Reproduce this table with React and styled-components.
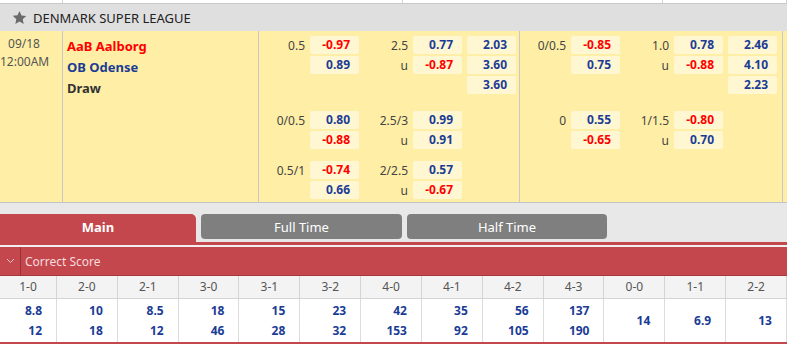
import styled, { createGlobalStyle } from "styled-components";

const GlobalStyle = createGlobalStyle`
  body {
    margin: 0;
    font-family: "Noto Sans", "Open Sans", sans-serif;
    background: #ffffff;
  }
  * {
    box-sizing: border-box;
  }
`;

const RED = "#c4474d";
const BLUE = "#1b3c95";

const blocks = [
  [
    {
      top: 4,
      rows: [
        ["0.5", "-0.97", "2.5", "0.77", "2.03"],
        ["", "0.89", "u", "-0.87", "3.60"],
        ["", null, "", null, "3.60"],
      ],
    },
    {
      top: 15,
      rows: [
        ["0/0.5", "0.80", "2.5/3", "0.99", null],
        ["", "-0.88", "u", "0.91", null],
      ],
    },
    {
      top: 10,
      rows: [
        ["0.5/1", "-0.74", "2/2.5", "0.57", null],
        ["", "0.66", "u", "-0.67", null],
      ],
    },
  ],
  [
    {
      top: 4,
      rows: [
        ["0/0.5", "-0.85", "1.0", "0.78", "2.46"],
        ["", "0.75", "u", "-0.88", "4.10"],
        ["", null, "", null, "2.23"],
      ],
    },
    {
      top: 15,
      rows: [
        ["0", "0.55", "1/1.5", "-0.80", null],
        ["", "-0.65", "u", "0.70", null],
      ],
    },
  ],
];

const scores = [
  ["1-0", "8.8", "12"],
  ["2-0", "10", "18"],
  ["2-1", "8.5", "12"],
  ["3-0", "18", "46"],
  ["3-1", "15", "28"],
  ["3-2", "23", "32"],
  ["4-0", "42", "153"],
  ["4-1", "35", "92"],
  ["4-2", "56", "105"],
  ["4-3", "137", "190"],
  ["0-0", "14"],
  ["1-1", "6.9"],
  ["2-2", "13"],
];

const Odd = ({ value, gap }) => (
  <OddBox $empty={value == null} $neg={value && value.startsWith("-")} $gap={gap}>
    {value}
  </OddBox>
);

const Block = ({ groups, width }) => (
  <OddsCell $w={width}>
    {groups.map((g, gi) => (
      <Group key={gi} $top={g.top}>
        {g.rows.map((r, ri) => (
          <OddsRow key={ri}>
            <Label $w={51}>{r[0]}</Label>
            <Odd value={r[1]} />
            <Label $w={54}>{r[2]}</Label>
            <Odd value={r[3]} />
            {r[4] !== null && <Odd value={r[4]} gap={5} />}
          </OddsRow>
        ))}
      </Group>
    ))}
  </OddsCell>
);

const StarIcon = () => (
  <svg width="15" height="15" viewBox="0 0 24 24">
    <path
      fill="#6a6a6a"
      d="M12 1.5l3.2 7.1 7.6.8-5.7 5.2 1.6 7.6L12 18.3l-6.7 3.9 1.6-7.6-5.7-5.2 7.6-.8z"
    />
  </svg>
);

const App = () => (
  <>
    <GlobalStyle />
    <TopStrip>
      <StripCell $w={63} />
      <StripCell $w={340} />
      <StripCell $w={260} />
      <StripCell />
    </TopStrip>
    <LeagueHeader>
      <StarIcon />
      <LeagueName>DENMARK SUPER LEAGUE</LeagueName>
    </LeagueHeader>
    <MatchRow>
      <TimeCell>
        09/18
        <br />
        12:00AM
      </TimeCell>
      <TeamCell>
        <Team $color="#f00">AaB Aalborg</Team>
        <Team $color={BLUE}>OB Odense</Team>
        <Team $color="#333">Draw</Team>
      </TeamCell>
      <Block groups={blocks[0]} width={261} />
      <Block groups={blocks[1]} width={263} />
    </MatchRow>
    <TabBar>
      <Tab $active>Main</Tab>
      <Tab>Full Time</Tab>
      <Tab $w={200}>Half Time</Tab>
    </TabBar>
    <RedLine />
    <SectionBar>
      <Toggle>
        <svg width="9" height="6" viewBox="0 0 9 6">
          <polyline points="1,1 4.5,4.5 8,1" fill="none" stroke="#f0c6c8" strokeWidth="1" />
        </svg>
      </Toggle>
      <SectionTitle>Correct Score</SectionTitle>
    </SectionBar>
    <ScoreGrid>
      {scores.map((s) => (
        <HeadCell key={s[0]}>{s[0]}</HeadCell>
      ))}
      {scores.map((s) => (
        <ValueCell key={s[0]}>
          {s.slice(1).map((v, i) => (
            <div key={i}>{v}</div>
          ))}
        </ValueCell>
      ))}
    </ScoreGrid>
  </>
);

const TopStrip = styled.div`
  display: flex;
  height: 4px;
  border-bottom: 1px solid #c9c9c9;
`;

const StripCell = styled.div`
  width: ${(p) => (p.$w ? `${p.$w}px` : "auto")};
  flex: ${(p) => (p.$w ? "none" : "1")};
  border-right: 1px solid #d2d2d2;
`;

const LeagueHeader = styled.div`
  display: flex;
  align-items: center;
  height: 27px;
  padding-left: 12px;
  background: #dfdfdf;
`;

const LeagueName = styled.span`
  margin-left: 6px;
  font-size: 13px;
  color: #222;
`;

const MatchRow = styled.div`
  display: flex;
  height: 172px;
  background: #ffefa6;
  border-bottom: 1px solid #c4c4c4;
`;

const TimeCell = styled.div`
  width: 63px;
  padding: 4px 14px 0 0;
  border-right: 1px solid #c8c8c8;
  text-align: center;
  font-size: 12px;
  line-height: 18px;
  color: #555;
`;

const TeamCell = styled.div`
  width: 196px;
  padding: 5px 0 0 4px;
  border-right: 1px solid #c8c8c8;
`;

const Team = styled.div`
  font-size: 13px;
  font-weight: 700;
  line-height: 21px;
  color: ${(p) => p.$color};
`;

const OddsCell = styled.div`
  width: ${(p) => p.$w}px;
  border-right: 1px solid #c8c8c8;
`;

const Group = styled.div`
  margin-top: ${(p) => p.$top}px;
`;

const OddsRow = styled.div`
  display: flex;
  height: 20px;
  align-items: center;
`;

const Label = styled.div`
  width: ${(p) => p.$w}px;
  padding-right: 5px;
  text-align: right;
  font-size: 12px;
  color: #444;
`;

const OddBox = styled.div`
  width: 49px;
  height: 18px;
  margin-left: ${(p) => p.$gap || 0}px;
  padding-right: 9px;
  border-radius: 2px;
  background: ${(p) => (p.$empty ? "transparent" : "#fff7d2")};
  text-align: right;
  font-size: 12px;
  font-weight: 700;
  line-height: 18px;
  color: ${(p) => (p.$neg ? "#f00" : BLUE)};
`;

const TabBar = styled.div`
  display: flex;
  align-items: flex-start;
  gap: 5px;
  height: 39px;
  padding-top: 11px;
  background: #e8e8e8;
`;

const Tab = styled.div`
  width: ${(p) => (p.$active ? 196 : p.$w || 201)}px;
  height: ${(p) => (p.$active ? 28 : 25)}px;
  border-radius: ${(p) => (p.$active ? "0 5px 0 0" : "4px")};
  background: ${(p) => (p.$active ? RED : "#7f7f7f")};
  color: #fff;
  text-align: center;
  font-size: 13px;
  font-weight: ${(p) => (p.$active ? 700 : 400)};
  line-height: 26px;
`;

const RedLine = styled.div`
  height: 3px;
  background: ${RED};
  border-bottom: 2px solid #f0f0f0;
  box-sizing: content-box;
`;

const SectionBar = styled.div`
  display: flex;
  align-items: stretch;
  height: 29px;
  background: ${RED};
  border-bottom: 1px solid #a8353b;
`;

const Toggle = styled.div`
  display: flex;
  align-items: center;
  justify-content: center;
  width: 21px;
  border-right: 1px solid #9c2f35;
`;

const SectionTitle = styled.div`
  display: flex;
  align-items: center;
  padding-left: 4px;
  font-size: 12px;
  color: #f6dcdd;
`;

const ScoreGrid = styled.div`
  display: grid;
  grid-template-columns: 57px repeat(12, 1fr);
  grid-template-rows: 23px 43px;
  border-bottom: 2px solid ${RED};
`;

const HeadCell = styled.div`
  background: #f3f3f3;
  border-right: 1px solid #d4d4d4;
  border-bottom: 1px solid #d4d4d4;
  text-align: center;
  font-size: 12px;
  line-height: 22px;
  color: #555;
`;

const ValueCell = styled.div`
  display: flex;
  flex-direction: column;
  justify-content: center;
  padding-right: 14px;
  border-right: 1px solid #dcdcdc;
  text-align: right;
  font-size: 12px;
  font-weight: 700;
  line-height: 20px;
  color: ${BLUE};
`;

export default App;
